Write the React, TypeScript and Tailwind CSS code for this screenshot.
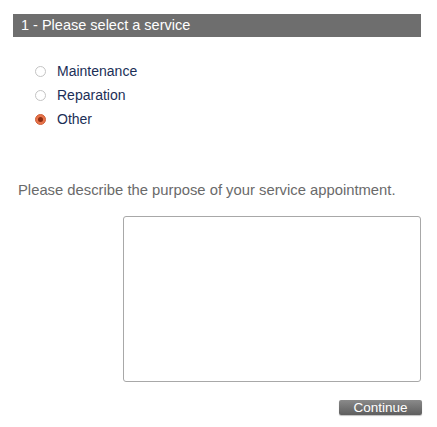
import React, { useState } from 'react';

const services = ['Maintenance', 'Reparation', 'Other'];

export default function App() {
  const [service, setService] = useState('Other');

  return (
    <div className="w-[437px] h-[427px] bg-white pt-[14px] font-['Liberation_Sans',Arial,sans-serif]">
      {/* step header */}
      <div className="mx-[13px] w-[408px] h-[23px] bg-[#6e6e6e] text-white text-[14.5px] leading-[23px] pl-[8px]">
        1 - Please select a service
      </div>

      {/* service options */}
      <div className="flex flex-col pl-[35px] pt-[25px] gap-[6px]">
        {services.map((s) => (
          <label key={s} className="flex items-center h-[18px] cursor-pointer" onClick={() => setService(s)}>
            {service === s ? (
              <span className="w-[11px] h-[11px] rounded-full bg-[#e8744a] border border-[#d0603a] flex items-center justify-center">
                <span className="w-[5px] h-[5px] rounded-full bg-[#8a2c12]" />
              </span>
            ) : (
              <span className="w-[11px] h-[11px] rounded-full border border-[#c4c4c4] bg-white" />
            )}
            <span className="ml-[11px] text-[14px] text-[#1c2f57]">{s}</span>
          </label>
        ))}
      </div>

      <p className="mt-[53px] pl-[18px] text-[14.8px] leading-[18px] text-[#6a6a6a]">
        Please describe the purpose of your service appointment.
      </p>

      <div className="flex justify-end pr-[16px] mt-[17px]">
        <textarea className="w-[298px] h-[166px] border border-[#a8a8a8] rounded-[3px] resize-none outline-none" />
      </div>

      <div className="flex justify-end pr-[15px] mt-[18px]">
        <button className="w-[83px] h-[15px] rounded-[2px] bg-gradient-to-b from-[#8a8a8a] to-[#5e5e5e] text-white text-[13.5px] leading-[15px] shadow-[0_1px_1px_rgba(0,0,0,0.25)]">
          Continue
        </button>
      </div>
    </div>
  );
}
